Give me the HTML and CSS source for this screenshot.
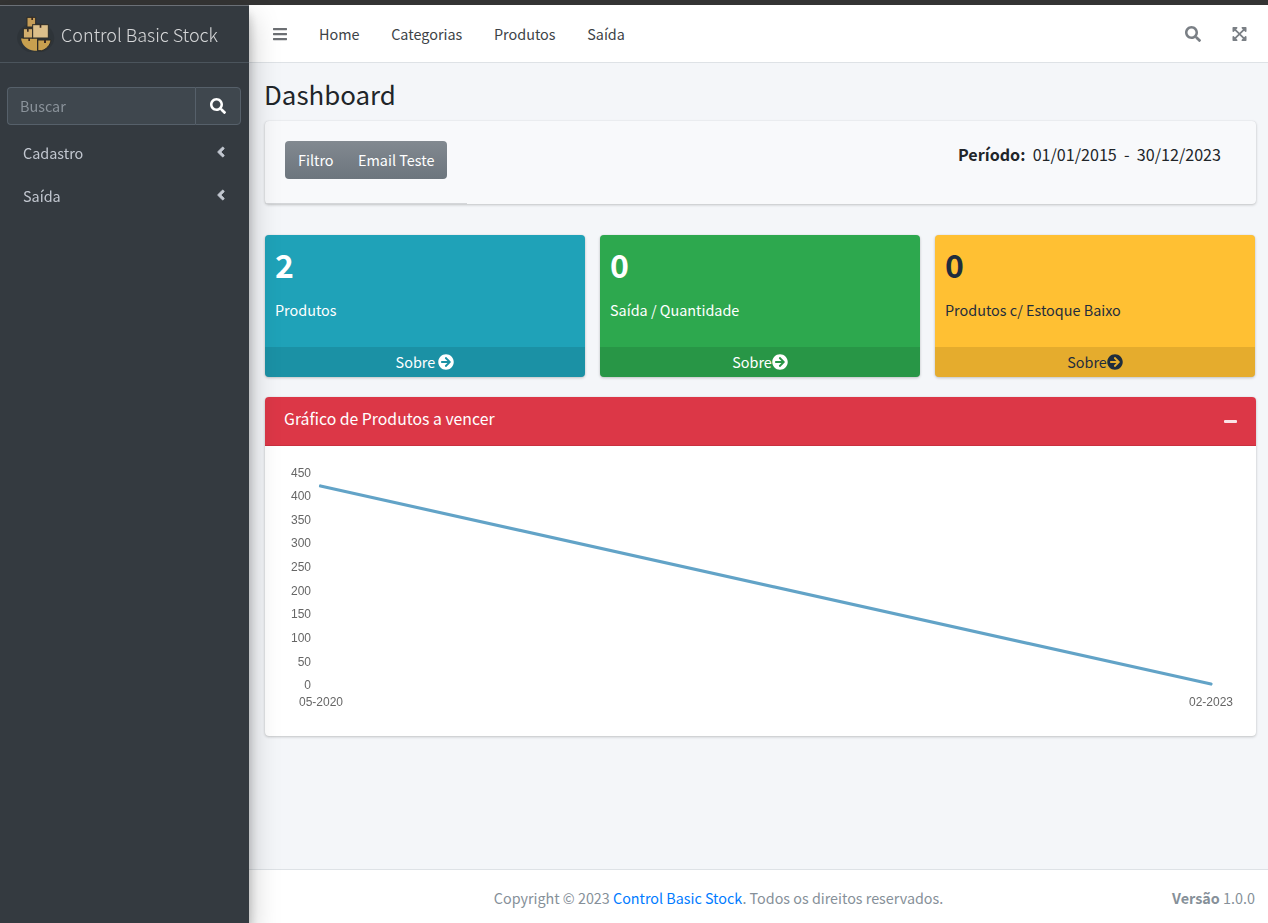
FILE: index.html
```html
<!DOCTYPE html>
<html lang="pt-BR">
<head>
<meta charset="utf-8">
<title>Control Basic Stock</title>
<link rel="stylesheet" href="styles.css">
</head>
<body>
<svg class="defs" width="0" height="0" aria-hidden="true">
  <symbol id="i-search" viewBox="0 0 512 512"><path d="M505 442.7L405.3 343c-4.5-4.5-10.6-7-17-7H372c27.6-35.3 44-79.7 44-128C416 93.1 322.9 0 208 0S0 93.1 0 208s93.1 208 208 208c48.3 0 92.7-16.4 128-44v16.3c0 6.4 2.5 12.5 7 17l99.7 99.7c9.4 9.4 24.6 9.4 33.9 0l28.3-28.3c9.4-9.4 9.4-24.6.1-34zM208 336c-70.7 0-128-57.2-128-128 0-70.7 57.2-128 128-128 70.7 0 128 57.2 128 128 0 70.7-57.2 128-128 128z"/></symbol>
  <symbol id="i-bars" viewBox="0 0 448 512"><path d="M16 132h416c8.837 0 16-7.163 16-16V76c0-8.837-7.163-16-16-16H16C7.163 60 0 67.163 0 76v40c0 8.837 7.163 16 16 16zm0 160h416c8.837 0 16-7.163 16-16v-40c0-8.837-7.163-16-16-16H16c-8.837 0-16 7.163-16 16v40c0 8.837 7.163 16 16 16zm0 160h416c8.837 0 16-7.163 16-16v-40c0-8.837-7.163-16-16-16H16c-8.837 0-16 7.163-16 16v40c0 8.837 7.163 16 16 16z"/></symbol>
  <symbol id="i-angle" viewBox="0 0 256 512"><path d="M31.7 239l136-136c9.4-9.4 24.6-9.4 33.9 0l22.6 22.6c9.4 9.4 9.4 24.6 0 33.9L127.9 256l96.4 96.4c9.4 9.4 9.4 24.6 0 33.9L201.7 409c-9.4 9.4-24.6 9.4-33.9 0l-136-136c-9.5-9.4-9.5-24.6-.1-34z"/></symbol>
  <symbol id="i-arrow" viewBox="0 0 512 512"><path d="M256 8c137 0 248 111 248 248S393 504 256 504 8 393 8 256 119 8 256 8zm-28.9 143.6l75.5 72.4H120c-13.3 0-24 10.7-24 24v16c0 13.3 10.7 24 24 24h182.6l-75.5 72.4c-9.7 9.3-9.9 24.8-.4 34.3l11 10.9c9.4 9.4 24.6 9.4 33.9 0L404.3 273c9.4-9.4 9.4-24.6 0-33.9L271.6 106.3c-9.4-9.4-24.6-9.4-33.9 0l-11 10.9c-9.5 9.6-9.3 25.1.4 34.4z"/></symbol>
  <symbol id="i-expand" viewBox="0 0 448 512"><path d="M448 344v112a23.94 23.94 0 0 1-24 24H312c-21.39 0-32.09-25.9-17-41l36.2-36.2L224 295.6 116.77 402.9 153 439c15.09 15.1 4.39 41-17 41H24a23.94 23.94 0 0 1-24-24V344c0-21.4 25.89-32.1 41-17l36.19 36.2L184.46 256 77.18 148.7 41 185c-15.1 15.1-41 4.4-41-17V56a23.94 23.94 0 0 1 24-24h112c21.39 0 32.09 25.9 17 41l-36.2 36.2L224 216.4l107.23-107.3L295 73c-15.09-15.1-4.39-41 17-41h112a23.94 23.94 0 0 1 24 24v112c0 21.4-25.89 32.1-41 17l-36.19-36.2L263.54 256l107.28 107.3L407 327.1c15.1-15.2 41-4.5 41 16.9z"/></symbol>
</svg>
<div class="topstrip"></div>
<div class="app">
  <aside class="sidebar">
    <a class="brand">
      <svg class="brand-logo" viewBox="0 0 120 120" aria-hidden="true">
        <ellipse cx="62" cy="78" rx="56" ry="46" fill="#000" opacity=".1"/>
        <path d="M18 78H68V116H58C36 114 20 100 18 78z" fill="#c8a04f"/>
        <path d="M68 84H108C106 100 94 112 80 116H68z" fill="#c8a04f" stroke="#2b2a26" stroke-width="3"/>
        <path d="M18 78H68V116" fill="none" stroke="#2b2a26" stroke-width="3"/>
        <path d="M36 45V16H62V45z" fill="#c69d57" stroke="#2b2a26" stroke-width="3"/>
        <rect x="25" y="50" width="28" height="28" fill="#d2ae6e" stroke="#2b2a26" stroke-width="3"/>
        <rect x="53" y="38" width="47" height="40" fill="#dcbf8a" stroke="#2b2a26" stroke-width="3"/>
        <path d="M49 14h5v10h-5zM36 50h5v9h-5zM74 38h5v9h-5zM87 84h6v9h-6zM40 78h5v9h-5z" fill="#3b2a22"/>
      </svg>
      <span class="brand-text">Control Basic Stock</span>
    </a>
    <form class="side-search">
      <input class="side-input" type="text" placeholder="Buscar">
      <button class="side-btn" type="button"><svg class="ico ico-side"><use href="#i-search"/></svg></button>
    </form>
    <ul class="side-nav">
      <li class="side-item"><span>Cadastro</span><svg class="ico ico-angle"><use href="#i-angle"/></svg></li>
      <li class="side-item"><span>Saída</span><svg class="ico ico-angle"><use href="#i-angle"/></svg></li>
    </ul>
  </aside>
  <div class="main">
    <nav class="topnav">
      <svg class="ico ico-bars"><use href="#i-bars"/></svg>
      <ul class="nav-links">
        <li>Home</li><li>Categorias</li><li>Produtos</li><li>Saída</li>
      </ul>
      <div class="nav-right">
        <svg class="ico ico-nsearch"><use href="#i-search"/></svg>
        <svg class="ico ico-expand"><use href="#i-expand"/></svg>
      </div>
    </nav>
    <main class="content">
      <h1 class="title">Dashboard</h1>
      <section class="filter-card">
        <div class="btn-group"><span class="btn">Filtro</span><span class="btn">Email Teste</span></div>
        <p class="period"><strong>Período:</strong>&nbsp; 01/01/2015&nbsp; -&nbsp; 30/12/2023</p>
      </section>
      <section class="stats">
        <article class="stat stat-info">
          <div class="stat-body"><h3>2</h3><p>Produtos</p></div>
          <a class="stat-foot">Sobre <svg class="ico ico-arrow"><use href="#i-arrow"/></svg></a>
        </article>
        <article class="stat stat-success">
          <div class="stat-body"><h3>0</h3><p>Saída / Quantidade</p></div>
          <a class="stat-foot">Sobre<svg class="ico ico-arrow"><use href="#i-arrow"/></svg></a>
        </article>
        <article class="stat stat-warning">
          <div class="stat-body"><h3>0</h3><p>Produtos c/ Estoque Baixo</p></div>
          <a class="stat-foot">Sobre<svg class="ico ico-arrow"><use href="#i-arrow"/></svg></a>
        </article>
      </section>
      <section class="chart-card">
        <header class="chart-head"><h2>Gráfico de Produtos a vencer</h2><span class="minus"></span></header>
        <svg class="chart" viewBox="0 0 991 291" width="991" height="291">
          <g class="y-axis" text-anchor="end">
            <text x="46" y="31">450</text><text x="46" y="54">400</text><text x="46" y="78">350</text>
            <text x="46" y="101">300</text><text x="46" y="125">250</text><text x="46" y="149">200</text>
            <text x="46" y="172">150</text><text x="46" y="196">100</text><text x="46" y="220">50</text>
            <text x="46" y="243">0</text>
          </g>
          <g class="x-axis" text-anchor="middle">
            <text x="56" y="260">05-2020</text><text x="946" y="260">02-2023</text>
          </g>
          <line class="series" x1="55.5" y1="40" x2="946" y2="238"/>
        </svg>
      </section>
    </main>
    <footer class="footer">
      <p class="copy">Copyright © 2023 <a class="link">Control Basic Stock</a>. Todos os direitos reservados.</p>
      <p class="version"><strong>Versão</strong> 1.0.0</p>
    </footer>
  </div>
</div>
</body>
</html>
```

FILE: styles.css
```css
* { box-sizing: border-box; }
html, body { margin: 0; height: 100%; }
body {
  width: 1268px;
  height: 923px;
  overflow: hidden;
  display: flex;
  flex-direction: column;
  font-family: "Noto Sans CJK SC", "Noto Sans", sans-serif;
  font-size: 14.4px;
  line-height: 24px;
  color: #212529;
  background: #f4f6f9;
}
.defs { position: absolute; }
h1, h2, h3, p, ul { margin: 0; padding: 0; }
ul { list-style: none; }
.ico { display: block; fill: currentColor; }

.topstrip { height: 5px; flex: none; background: #343434; }
.app { flex: 1; display: flex; min-height: 0; }

/* Sidebar */
.sidebar {
  width: 249px;
  flex: none;
  background: #343a40;
  border-top: 1px solid #6b7077;
  box-shadow: 0 14px 28px rgba(0,0,0,.25), 0 10px 10px rgba(0,0,0,.22);
  position: relative;
  z-index: 2;
}
.brand {
  height: 57px;
  display: flex;
  align-items: center;
  padding-left: 15px;
  gap: 6px;
  border-bottom: 1px solid #4b545c;
}
.brand-logo { width: 40px; height: 40px; flex: none; margin-top: -5px; }
.brand-text { font-size: 18px; font-weight: 300; color: rgba(255,255,255,.8); white-space: nowrap; }
.side-search { display: flex; height: 38px; margin: 24px 8px 0 7px; }
.side-input {
  flex: 1;
  min-width: 0;
  height: 38px;
  padding: 0 12px 2px;
  font: inherit;
  color: #fff;
  background: #3f474e;
  border: 1px solid #56606a;
  border-right: 0;
  border-radius: 4px 0 0 4px;
  outline: 0;
}
.side-input::placeholder { color: #8b939b; opacity: 1; }
.side-btn {
  width: 46px;
  height: 38px;
  display: flex;
  align-items: center;
  justify-content: center;
  padding: 0;
  color: #fff;
  background: #3f474e;
  border: 1px solid #56606a;
  border-radius: 0 4px 4px 0;
}
.ico-side { width: 16px; height: 16px; }
.side-nav { margin-top: 8px; }
.side-item {
  height: 43px;
  display: flex;
  align-items: center;
  justify-content: space-between;
  padding: 0 24px 4px 23px;
  color: #c2c7d0;
}
.ico-angle { width: 8px; height: 16px; margin-top: -1px; stroke: currentColor; stroke-width: 24; }

/* Main column */
.main { flex: 1; min-width: 0; display: flex; flex-direction: column; }
.topnav {
  height: 58px;
  flex: none;
  display: flex;
  align-items: center;
  padding: 0 21px 0 24px;
  background: #fff;
  border-bottom: 1px solid #dee2e6;
}
.ico-bars { width: 14px; height: 16px; color: #6c6f73; }
.nav-links { display: flex; gap: 31.7px; margin-left: 32px; color: #3d4347; }
.nav-right { margin-left: auto; display: flex; align-items: center; gap: 31px; color: #7a7f85; }
.ico-nsearch { width: 16px; height: 16px; }
.ico-expand { width: 15px; height: 16px; }

.content { flex: 1; padding: 0 12px 0 16px; min-height: 0; }
.title { font-size: 25.9px; font-weight: 400; line-height: 34px; margin: 14px 0 0 -1px; color: #212529; }
.filter-card {
  height: 83px;
  margin-top: 10px;
  padding: 20px 35px 0 20px;
  display: flex;
  justify-content: space-between;
  align-items: flex-start;
  position: relative;
  background: #f8f9fb;
  border-radius: 4px;
  box-shadow: 0 0 1px rgba(0,0,0,.125), 0 1px 3px rgba(0,0,0,.2);
}
.filter-card::after {
  content: "";
  position: absolute;
  left: 0;
  bottom: 0;
  width: 202px;
  height: 1px;
  background: #d4d6d9;
  border-bottom-left-radius: 4px;
}
.btn-group {
  height: 38px;
  display: flex;
  align-items: center;
  border-radius: 4px;
  color: #fff;
  background: linear-gradient(#828990, #6c757d);
}
.btn { padding: 0 12.5px 0 13px; white-space: nowrap; }
.btn + .btn { padding-left: 12px; }
.period { margin-top: 1px; white-space: nowrap; font-size: 16.12px; }

.stats { display: grid; grid-template-columns: repeat(3, 320px); gap: 15px; margin-top: 31px; }
.stat {
  height: 142px;
  display: flex;
  flex-direction: column;
  border-radius: 4px;
  overflow: hidden;
  box-shadow: 0 0 1px rgba(0,0,0,.125), 0 1px 3px rgba(0,0,0,.2);
  color: #fff;
}
.stat-info { background: #1fa2b8; }
.stat-success { background: #2da84e; }
.stat-warning { background: #ffc033; color: #1f2d3d; }
.stat-body { flex: 1; padding: 8px 10px; }
.stat-body h3 { font-size: 32px; font-weight: 700; line-height: 42px; }
.stat-body p { margin-top: 13px; }
.stat-foot {
  height: 30px;
  flex: none;
  display: flex;
  align-items: center;
  justify-content: center;
  background: rgba(0,0,0,.1);
  white-space: pre;
}
.ico-arrow { width: 16px; height: 16px; }

.chart-card {
  height: 339px;
  margin-top: 20px;
  background: #fff;
  border-radius: 4px;
  overflow: hidden;
  box-shadow: 0 0 1px rgba(0,0,0,.125), 0 1px 3px rgba(0,0,0,.2);
}
.chart-head {
  height: 49px;
  display: flex;
  align-items: center;
  justify-content: space-between;
  padding: 0 19px 5px 19px;
  color: #fff;
  background: #dc3747;
  border-bottom: 1px solid #c9303f;
}
.chart-head h2 { font-size: 15.8px; font-weight: 400; }
.minus { width: 13px; height: 3px; margin-top: 5px; background: #fbe3e6; border-radius: 1px; }
.chart { display: block; will-change: transform; }
.chart text { font-family: "Liberation Sans", Arial, sans-serif; font-size: 12px; fill: #666; }
.series { stroke: #62a3c7; stroke-width: 3.2; stroke-linecap: round; }

.footer {
  height: 54px;
  flex: none;
  display: flex;
  align-items: center;
  padding: 3px 13px 0 16px;
  color: #869099;
  background: #fff;
  border-top: 1px solid #dee2e6;
}
.copy { flex: 1; text-align: center; font-size: 14.33px; }
.link { color: #007bff; }
.version { white-space: nowrap; }
```
